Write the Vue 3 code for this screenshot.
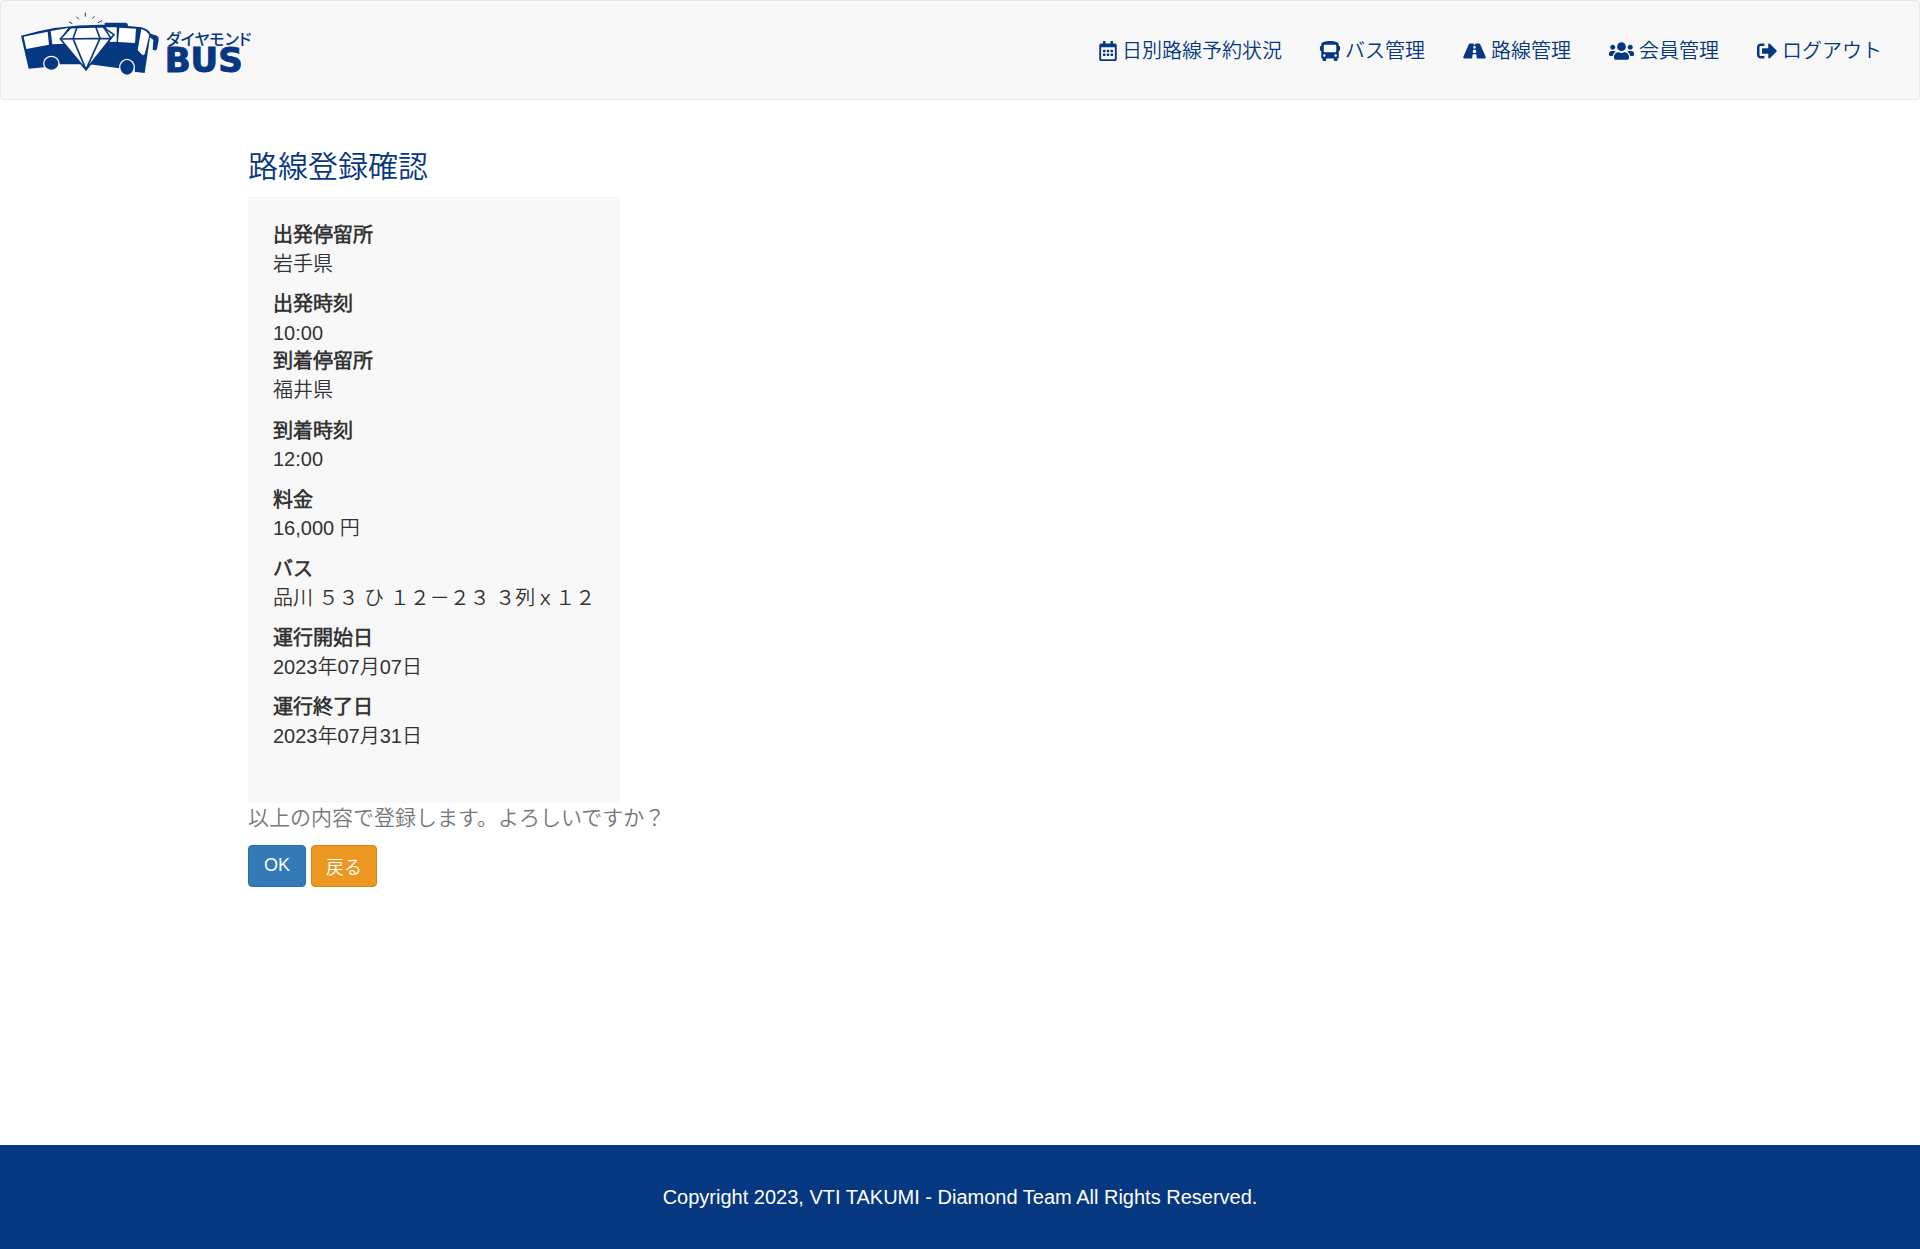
<script setup>
const navItems = [
  { label: '日別路線予約状況', box: '0 0 448 512', width: 18, path: 'M148 288h-40c-6.6 0-12-5.4-12-12v-40c0-6.6 5.4-12 12-12h40c6.6 0 12 5.4 12 12v40c0 6.6-5.4 12-12 12zm108-12v-40c0-6.6-5.4-12-12-12h-40c-6.6 0-12 5.4-12 12v40c0 6.6 5.4 12 12 12h40c6.6 0 12-5.4 12-12zm96 0v-40c0-6.6-5.4-12-12-12h-40c-6.6 0-12 5.4-12 12v40c0 6.6 5.4 12 12 12h40c6.6 0 12-5.4 12-12zm-96 96v-40c0-6.6-5.4-12-12-12h-40c-6.6 0-12 5.4-12 12v40c0 6.6 5.4 12 12 12h40c6.6 0 12-5.4 12-12zm-96 0v-40c0-6.6-5.4-12-12-12h-40c-6.6 0-12 5.4-12 12v40c0 6.6 5.4 12 12 12h40c6.6 0 12-5.4 12-12zm192 0v-40c0-6.6-5.4-12-12-12h-40c-6.6 0-12 5.4-12 12v40c0 6.6 5.4 12 12 12h40c6.6 0 12-5.4 12-12zm96-260v352c0 26.5-21.5 48-48 48H48c-26.5 0-48-21.5-48-48V112c0-26.5 21.5-48 48-48h48V12c0-6.6 5.4-12 12-12h40c6.6 0 12 5.4 12 12v52h128V12c0-6.6 5.4-12 12-12h40c6.6 0 12 5.4 12 12v52h48c26.5 0 48 21.5 48 48zm-48 346V160H48v298c0 3.3 2.7 6 6 6h340c3.3 0 6-2.7 6-6z' },
  { label: 'バス管理', box: '0 0 512 512', width: 20, path: 'M488 128h-8V80c0-44.8-99.2-80-224-80S32 35.2 32 80v48h-8c-13.25 0-24 10.74-24 24v80c0 13.25 10.75 24 24 24h8v160c0 17.67 14.33 32 32 32v32c0 17.67 14.33 32 32 32h32c17.67 0 32-14.33 32-32v-32h192v32c0 17.67 14.33 32 32 32h32c17.67 0 32-14.33 32-32v-32h6.4c16 0 25.6-12.8 25.6-25.6V256h8c13.25 0 24-10.75 24-24v-80c0-13.26-10.75-24-24-24zM112 400c-17.67 0-32-14.33-32-32s14.33-32 32-32 32 14.33 32 32-14.33 32-32 32zm16-112c-17.67 0-32-14.33-32-32V128c0-17.67 14.33-32 32-32h256c17.67 0 32 14.33 32 32v128c0 17.67-14.33 32-32 32H128zm272 112c-17.67 0-32-14.33-32-32s14.33-32 32-32 32 14.33 32 32-14.33 32-32 32z' },
  { label: '路線管理', box: '0 0 576 512', width: 23, path: 'M573.19 402.67l-139.79-320C428.43 71.29 417.6 64 405.68 64h-97.59l2.45 23.16c.5 4.72-3.21 8.84-7.96 8.84h-29.16c-4.75 0-8.46-4.12-7.96-8.84L267.91 64h-97.59c-11.93 0-22.76 7.29-27.73 18.67L2.8 402.67C-6.45 423.86 8.31 448 30.54 448h196.84l10.31-97.68c.86-8.14 7.72-14.32 15.91-14.32h68.8c8.19 0 15.05 6.18 15.91 14.32L348.62 448h196.84c22.23 0 36.99-24.14 27.73-45.33zM260.4 135.16a8 8 0 0 1 7.96-7.16h39.29c4.09 0 7.53 3.09 7.96 7.16l4.6 43.58c.75 7.09-4.81 13.26-11.93 13.26h-40.54c-7.13 0-12.68-6.17-11.93-13.26l4.59-43.58zM315.64 304h-55.29c-9.5 0-16.91-8.23-15.91-17.68l5.07-48c.86-8.14 7.72-14.32 15.91-14.32h45.15c8.19 0 15.05 6.18 15.91 14.32l5.07 48c1 9.45-6.41 17.68-15.91 17.68z' },
  { label: '会員管理', box: '0 0 640 512', width: 25, path: 'M96 224c35.3 0 64-28.7 64-64s-28.7-64-64-64-64 28.7-64 64 28.7 64 64 64zm448 0c35.3 0 64-28.7 64-64s-28.7-64-64-64-64 28.7-64 64 28.7 64 64 64zm32 32h-64c-17.6 0-33.5 7.1-45.1 18.6 40.3 22.1 68.9 62 75.1 109.4h66c17.7 0 32-14.3 32-32v-32c0-35.3-28.7-64-64-64zm-256 0c61.9 0 112-50.1 112-112S381.9 32 320 32 208 82.1 208 144s50.1 112 112 112zm76.8 32h-8.3c-20.8 10-43.9 16-68.5 16s-47.6-6-68.5-16h-8.3C179.6 288 128 339.6 128 403.2V432c0 26.5 21.5 48 48 48h288c26.5 0 48-21.5 48-48v-28.8c0-63.6-51.6-115.2-115.2-115.2zm-223.7-13.4C161.5 263.1 145.6 256 128 256H64c-35.3 0-64 28.7-64 64v32c0 17.7 14.3 32 32 32h65.9c6.3-47.4 34.9-87.3 75.2-109.4z' },
  { label: 'ログアウト', box: '0 0 512 512', width: 20, path: 'M497 273L329 441c-15 15-41 4.5-41-17v-96H152c-13.3 0-24-10.7-24-24v-96c0-13.3 10.7-24 24-24h136V88c0-21.4 25.9-32 41-17l168 168c9.3 9.4 9.3 24.6 0 34zM192 436v-40c0-6.6-5.4-12-12-12H96c-17.7 0-32-14.3-32-32V160c0-17.7 14.3-32 32-32h84c6.6 0 12-5.4 12-12V76c0-6.6-5.4-12-12-12H96c-53 0-96 43-96 96v192c0 53 43 96 96 96h84c6.6 0 12-5.4 12-12z' },
]

const fields = [
  { label: '出発停留所', value: '岩手県' },
  { label: '出発時刻', value: '10:00', tight: true },
  { label: '到着停留所', value: '福井県' },
  { label: '到着時刻', value: '12:00' },
  { label: '料金', value: '16,000 円' },
  { label: 'バス', value: '品川 ５３ ひ １２－２３ ３列ｘ１２' },
  { label: '運行開始日', value: '2023年07月07日' },
  { label: '運行終了日', value: '2023年07月31日' },
]
</script>

<template>
  <div class="page">
    <header class="navbar">
      <a class="brand" href="#" aria-label="ダイヤモンドBUS">
        <svg class="logo" viewBox="60 30 702 219">
          <!-- bus body -->
          <path class="navy" d="M63 107Q180 72 314 74V68H376Q384 68 384 78L425 82Q445 88 452 101L471 107Q477 110 476 119L471 147Q469 152 464 151L458 149L460 120L450 112L434 219L404 215A23 27 0 0 0 358 205L268 193H180A27 24 0 0 0 131 197L133 202L86 206Z" />
          <!-- windows -->
          <path class="pale" d="M71 110L143 95L147 134L79 147ZM152 93L205 84L181 116L196 131L157 133ZM358 83L408 86L405 129L354 126ZM424 87Q440 91 448 106L435 160Q431 169 425 163L413 150Z" />
          <!-- wheels -->
          <ellipse class="navy rim" cx="154" cy="190" rx="23" ry="21" />
          <ellipse class="navy rim" cx="381" cy="202" rx="22" ry="24" />
          <!-- diamond -->
          <path class="pale" d="M318 82L350 82V125L330 126Z" />
          <path class="gem" d="M212 83L310 80L333 115L258 209L181 117Z" />
          <path class="facet" d="M181 117L333 115M231 82L219 116L258 209L300 115L287 80M310 82L342 104L328 120" />
          <path class="spark" d="M207 66L217 71M229 50L237 58M256 38V50M283 49L277 56M306 62L294 68" />
          <text class="kana" x="498" y="135">ダイヤモンド</text>
          <text class="latin" x="494" y="217">BUS</text>
        </svg>
      </a>
      <nav class="menu">
        <a v-for="item in navItems" :key="item.label" class="menu-link" href="#">
          <svg class="icon" :viewBox="item.box" :width="item.width" height="20"><path :d="item.path" /></svg>
          <span>{{ item.label }}</span>
        </a>
      </nav>
    </header>

    <main class="content">
      <h1 class="title">路線登録確認</h1>
      <dl class="card">
        <div v-for="f in fields" :key="f.label" class="field" :class="{ tight: f.tight }">
          <dt>{{ f.label }}</dt>
          <dd>{{ f.value }}</dd>
        </div>
      </dl>
      <p class="message">以上の内容で登録します。よろしいですか？</p>
      <div class="actions">
        <button type="button" class="btn primary">OK</button>
        <button type="button" class="btn warning">戻る</button>
      </div>
    </main>

    <footer class="footer">Copyright 2023, VTI TAKUMI - Diamond Team All Rights Reserved.</footer>
  </div>
</template>

<style>
body {
  margin: 0;
}
</style>

<style scoped>
.page {
  display: flex;
  flex-direction: column;
  min-height: 100vh;
  color: #333;
  font-family: "Liberation Sans", "Noto Sans CJK JP DemiLight", "Noto Sans CJK JP", sans-serif;
  font-size: 20px;
  font-weight: 350;
  line-height: 1.43;
}
.navbar {
  box-sizing: border-box;
  display: flex;
  justify-content: space-between;
  align-items: flex-start;
  min-height: 100px;
  padding: 9px 37px 0 19px;
  border: 1px solid #e7e7e7;
  border-radius: 4px;
  background: #f8f8f8;
}
.logo {
  display: block;
  width: 234px;
  height: 73px;
  overflow: visible;
}
.navy {
  fill: #063781;
}
.rim {
  stroke: #f8f8f8;
  stroke-width: 4;
}
.pale {
  fill: #fff;
}
.gem {
  fill: #fff;
  stroke: #063781;
  stroke-width: 5;
  stroke-linejoin: round;
}
.facet {
  fill: none;
  stroke: #063781;
  stroke-width: 5;
  stroke-linejoin: round;
}
.spark {
  stroke: #063781;
  stroke-width: 3;
}
.kana {
  fill: #063781;
  font-family: "Noto Sans CJK JP", sans-serif;
  font-size: 48px;
  font-weight: 500;
  font-feature-settings: "palt";
}
.latin {
  fill: #063781;
  stroke: #063781;
  stroke-width: 3;
  font-family: "DejaVu Sans", sans-serif;
  font-size: 102px;
  font-weight: 700;
}
.menu {
  display: flex;
  gap: 38px;
  padding-top: 27px;
}
.menu-link {
  display: flex;
  align-items: center;
  gap: 5px;
  color: #063781;
  text-decoration: none;
}
.icon {
  fill: currentColor;
}
.content {
  flex: 1;
  padding: 50px 248px 0;
}
.title {
  margin: 0 0 13px;
  color: #063781;
  font-size: 30px;
  font-weight: 350;
  line-height: 33px;
}
.card {
  width: fit-content;
  margin: 0;
  padding: 25px 25px 40px;
  background: #f8f8f8;
}
.field {
  margin-bottom: 12px;
}
.field.tight {
  margin-bottom: 0;
}
dt {
  font-weight: 700;
}
dd {
  margin: 0;
}
.message {
  margin: 0 0 12px;
  color: #777;
  font-size: 21px;
}
.actions {
  display: flex;
  gap: 5px;
}
.btn {
  height: 42px;
  padding: 0 15px;
  border: 1px solid #2e6da4;
  border-radius: 4px;
  background: #337ab7;
  color: #fff;
  font-family: inherit;
  font-size: 18px;
  font-weight: 350;
}
.warning {
  padding: 0 14px;
  border-color: #d58512;
  background: #ec971f;
}
.footer {
  padding: 38px 0 37px;
  background: #063781;
  color: #fff;
  text-align: center;
}
</style>
